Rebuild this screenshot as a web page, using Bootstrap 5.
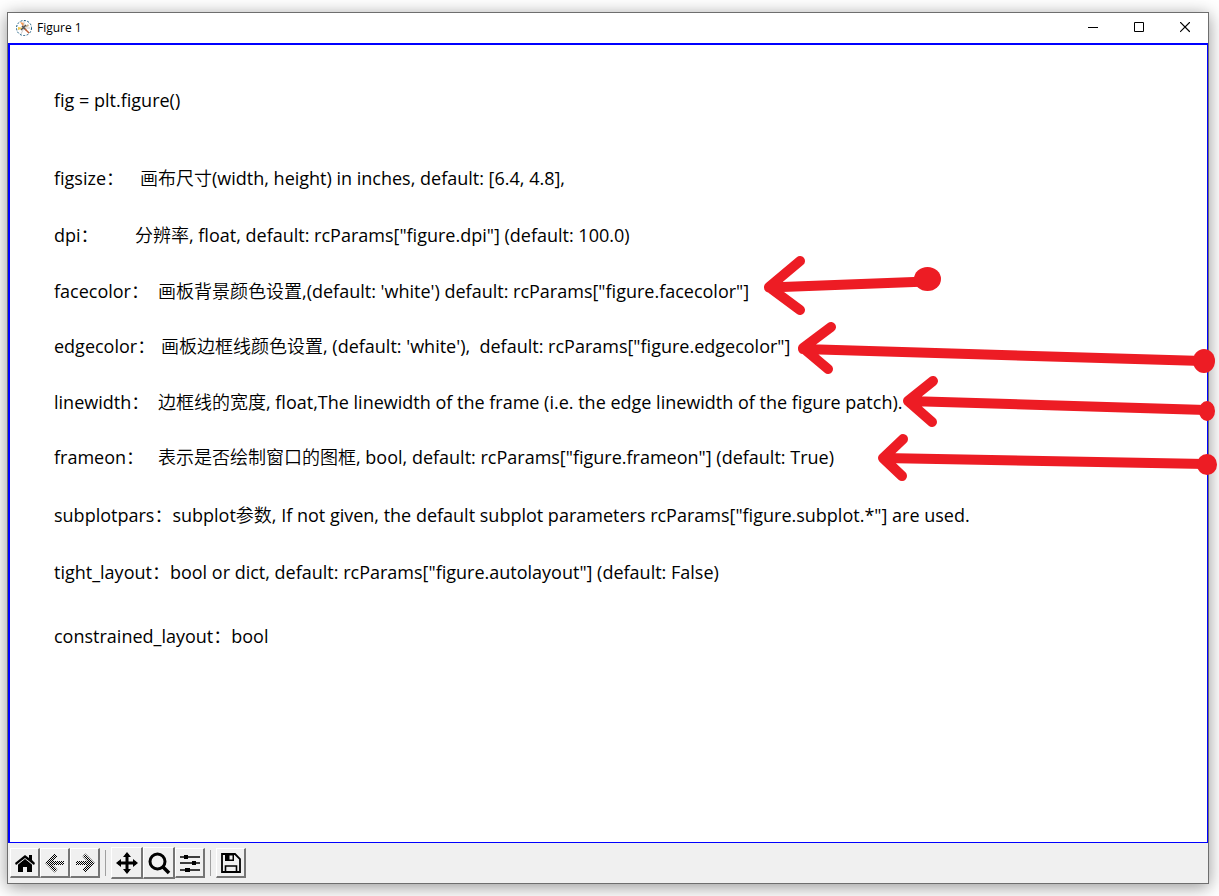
<!DOCTYPE html>
<html lang="zh-CN">
<head>
<meta charset="utf-8">
<meta name="viewport" content="width=device-width, initial-scale=1">
<title>Figure 1</title>
<link href="https://cdn.jsdelivr.net/npm/bootstrap@5.3.0/dist/css/bootstrap.min.css" rel="stylesheet">
<style>
  body { font-family: "Open Sans", "Noto Sans CJK SC", sans-serif; color: #000; background: #fff; padding: 12px 10px 12px 7px; }
  .fig-window { border: 1px solid #6e6e6e; background: #f0f0f0; box-shadow: 0 3px 16px rgba(0,0,0,.42); }
  .title-bar { height: 30px; background: #fff; padding-left: 8px; font-size: 12px; }
  .title-bar button { width: 46px; height: 30px; border: 0; background: none; padding: 0; }
  .canvas { background: #fff; border: solid #00f; border-width: 2px 1px 1px 2px; padding: 42px 44px; font-size: 18px; line-height: 26px; }
  .canvas dl > div { margin-top: 30px; }
  .canvas dl > .near { margin-top: 29px; }
  .canvas dl > .far { margin-top: 31px; }
  .canvas dl > .wide { margin-top: 32px; }
  .canvas dl > .last { margin-top: 38px; }
  .canvas dt { font-weight: 400; }
  .zh { font-family: "Noto Sans CJK SC", sans-serif; font-size: 18px; font-weight: 350; line-height: 1; }
  .k-dpi { width: 81px; } .k-size { width: 86px; } .k-wide { width: 104px; } .k-edge { width: 107px; }
  .tools { height: 40px; padding-left: 2px; }
  .tools button { width: 30px; height: 30px; padding: 0; border: solid; border-width: 1px 2px 2px 1px; border-color: #fff #757575 #757575 #fff; background: #f0f0f0; color: #000; }
  .tools .big { width: 32px; height: 32px; }
  .tools .sep { width: 1px; height: 26px; margin: 0 5px; background: #a0a0a0; }
  .marks { top: 0; left: 0; pointer-events: none; }
</style>
</head>
<body class="d-flex flex-column min-vh-100 position-relative overflow-hidden">
<main class="fig-window d-flex flex-column flex-grow-1">
  <header class="title-bar d-flex align-items-center">
    <svg width="17" height="17" viewBox="0 0 17 17" class="me-1" aria-hidden="true"><circle cx="8" cy="8" r="7.500" fill="#fff" stroke="#11557c" stroke-dasharray="2 1.500"/><path d="M8 8L4 2l4 1z" fill="#f49b55"/><path d="M8 8l4-4 1 2z" fill="#c9b08c"/><path d="M8 8l-6-1v3z" fill="#f0c850"/><path d="M8 8l-3 6M8 8l6 0M8 8l0-7" stroke="#ccc"/><path d="M6 6l4 4M10 5L5 10" stroke="#555" stroke-width="1.500"/><path d="M9 9l4 4" stroke="#c05a30" stroke-width="1.500"/></svg>
    <span class="flex-grow-1">Figure 1</span>
    <button type="button" aria-label="Minimize"><svg class="d-block mx-auto" width="10" height="12"><path d="M0 5.500h10" stroke="#000"/></svg></button>
    <button type="button" aria-label="Maximize"><svg class="d-block mx-auto" width="10" height="12"><path d="M.5.5h9v9h-9z" fill="none" stroke="#000"/></svg></button>
    <button type="button" aria-label="Close"><svg class="d-block mx-auto" width="10" height="12"><path d="M.5.5l9 9M9.500 .5L.5 9.500" stroke="#000" stroke-width="1.200" stroke-linecap="square"/></svg></button>
  </header>

  <section class="canvas flex-grow-1">
    <p class="mb-0">fig = plt.figure()</p>
    <dl class="mb-0 pt-3 mt-1">
      <div class="d-flex wide"><dt class="k-size">figsize<span class="zh">：</span></dt><dd class="mb-0"><span class="zh">画布尺寸</span>(width, height) in inches, default: [6.4, 4.8],</dd></div>
      <div class="d-flex far"><dt class="k-dpi">dpi<span class="zh">：</span></dt><dd class="mb-0"><span class="zh">分辨率</span>, float, default: rcParams["figure.dpi"] (default: 100.0)</dd></div>
      <div class="d-flex"><dt class="k-wide">facecolor<span class="zh">：</span></dt><dd class="mb-0"><span class="zh">画板背景颜色设置</span>,(default: 'white') default: rcParams["figure.facecolor"]</dd></div>
      <div class="d-flex near"><dt class="k-edge">edgecolor<span class="zh">：</span></dt><dd class="mb-0"><span class="zh">画板边框线颜色设置</span>, (default: 'white'),&nbsp; default: rcParams["figure.edgecolor"]</dd></div>
      <div class="d-flex"><dt class="k-wide">linewidth<span class="zh">：</span></dt><dd class="mb-0"><span class="zh">边框线的宽度</span>, float,The linewidth of the frame (i.e. the edge linewidth of the figure patch).</dd></div>
      <div class="d-flex near"><dt class="k-wide">frameon<span class="zh">：</span></dt><dd class="mb-0"><span class="zh">表示是否绘制窗口的图框</span>, bool, default: rcParams["figure.frameon"] (default: True)</dd></div>
      <div class="d-flex wide"><dt>subplotpars<span class="zh">：</span></dt><dd class="mb-0">subplot<span class="zh">参数</span>, If not given, the default subplot parameters rcParams["figure.subplot.*"] are used.</dd></div>
      <div class="d-flex far"><dt>tight_layout<span class="zh">：</span></dt><dd class="mb-0">bool or dict, default: rcParams["figure.autolayout"] (default: False)</dd></div>
      <div class="d-flex last"><dt>constrained_layout<span class="zh">：</span></dt><dd class="mb-0">bool</dd></div>
    </dl>
  </section>

  <nav class="tools d-flex align-items-center" aria-label="Figure tools">
    <button type="button" aria-label="Home"><svg class="d-block mx-auto" width="22" height="20" viewBox="0 0 22 20"><path d="M4 11l7-6 7 6v8h-5v-5H9v5H4zM1 10l10-8 4 3V2h3v5l3 3-1 2-9-7-9 7z"/><path d="M3 12l8-6.500 8 6.500" fill="none" stroke="#ddd"/></svg></button>
    <button type="button" aria-label="Back"><svg class="d-block mx-auto" width="22" height="22" viewBox="0 0 22 22"><defs><pattern id="dots" width="2" height="2" patternUnits="userSpaceOnUse"><path d="M0 0h1v1H0zM1 1h1v1H1z"/></pattern></defs><path d="M12 3L4 11l8 8M4 11h16" fill="none" stroke="url(#dots)" stroke-width="4"/></svg></button>
    <button type="button" aria-label="Forward"><svg class="d-block mx-auto" width="22" height="22" viewBox="0 0 22 22"><path d="M10 3l8 8-8 8M18 11H2" fill="none" stroke="url(#dots)" stroke-width="4"/></svg></button>
    <span class="sep"></span>
    <button type="button" class="big" aria-label="Pan"><svg class="d-block mx-auto" width="24" height="24" viewBox="0 0 24 24"><path d="M12 3v18M3 12h18" stroke="#000" stroke-width="3"/><path d="M12 1l4 5H8zM12 23l4-5H8zM1 12l5-4v8zM23 12l-5-4v8z"/></svg></button>
    <button type="button" class="big" aria-label="Zoom"><svg class="d-block mx-auto" width="24" height="24" viewBox="0 0 24 24"><circle cx="10.500" cy="10.500" r="7.500" fill="none" stroke="#000" stroke-width="3"/><path d="M16 16l6 6" stroke="#000" stroke-width="3.500"/></svg></button>
    <button type="button" aria-label="Configure subplots"><svg class="d-block mx-auto" width="22" height="20" viewBox="0 0 22 20"><path d="M1 4h20M1 10h20M1 17h20" stroke="#000" stroke-width="1.500"/><path d="M5 2h4v4H5zM13 8h4v4h-4zM6 15h5v4H6z"/></svg></button>
    <span class="sep"></span>
    <button type="button" aria-label="Save"><svg class="d-block mx-auto" width="22" height="22" viewBox="0 0 22 22"><path d="M2 2h13l5 5v13H2z" fill="none" stroke="#000" stroke-width="1.800"/><path d="M5 2h9v7H5z"/><path d="M9.500 3.500h3v4h-3z" fill="#f0f0f0"/><path d="M5.500 20v-6h11v6" fill="none" stroke="#000" stroke-width="1.600"/></svg></button>
  </nav>
</main>

<svg class="marks position-absolute" width="1219" height="896" viewBox="0 0 1219 896" fill="none" stroke="#ed1c24" stroke-width="10" stroke-linecap="round" stroke-linejoin="round" aria-hidden="true">
  <path d="M800 261l-31 26 31 23M769 287.500l158-6"/><ellipse cx="927.500" cy="279" rx="13.500" ry="12" fill="#ed1c24" stroke="none"/>
  <path d="M831 327l-28 21 25 21M803 349l400 12"/><ellipse cx="1204" cy="361" rx="11" ry="12" fill="#ed1c24" stroke="none"/>
  <path d="M933 381l-25 20 24 21M908 401l298 9"/><ellipse cx="1207" cy="411" rx="8" ry="10" fill="#ed1c24" stroke="none"/>
  <path d="M903 439l-20 19 19 18M883 458l323 6"/><ellipse cx="1207" cy="464.500" rx="10" ry="10.500" fill="#ed1c24" stroke="none"/>
</svg>
<script src="https://cdn.jsdelivr.net/npm/bootstrap@5.3.0/dist/js/bootstrap.bundle.min.js"></script>
</body>
</html>
